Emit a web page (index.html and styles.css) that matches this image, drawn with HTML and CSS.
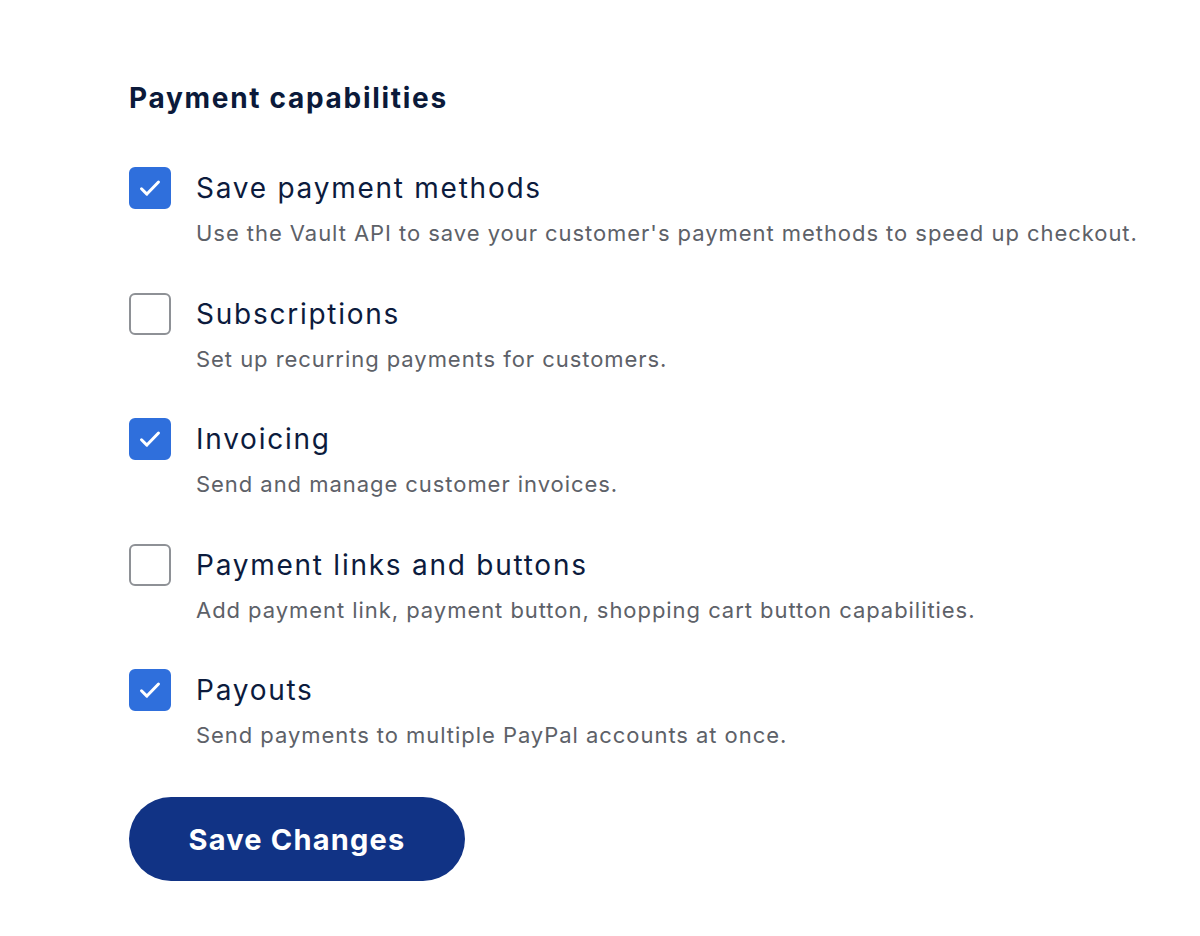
FILE: index.html
```html
<!DOCTYPE html>
<html lang="en">
<head>
<meta charset="utf-8">
<title>Payment capabilities</title>
<link rel="stylesheet" href="styles.css">
</head>
<body>
<main class="panel">
  <h2 class="title">Payment capabilities</h2>
  <ul class="options">
    <li class="option">
      <span class="box checked"><svg viewBox="0 0 24 24" class="tick"><path d="M6 12.5l3.8 3.8L18 7.8"/></svg></span>
      <div class="text">
        <div class="label">Save payment methods</div>
        <div class="desc">Use the Vault API to save your customer's payment methods to speed up checkout.</div>
      </div>
    </li>
    <li class="option">
      <span class="box"></span>
      <div class="text">
        <div class="label">Subscriptions</div>
        <div class="desc">Set up recurring payments for customers.</div>
      </div>
    </li>
    <li class="option">
      <span class="box checked"><svg viewBox="0 0 24 24" class="tick"><path d="M6 12.5l3.8 3.8L18 7.8"/></svg></span>
      <div class="text">
        <div class="label">Invoicing</div>
        <div class="desc">Send and manage customer invoices.</div>
      </div>
    </li>
    <li class="option">
      <span class="box"></span>
      <div class="text">
        <div class="label">Payment links and buttons</div>
        <div class="desc">Add payment link, payment button, shopping cart button capabilities.</div>
      </div>
    </li>
    <li class="option">
      <span class="box checked"><svg viewBox="0 0 24 24" class="tick"><path d="M6 12.5l3.8 3.8L18 7.8"/></svg></span>
      <div class="text">
        <div class="label">Payouts</div>
        <div class="desc">Send payments to multiple PayPal accounts at once.</div>
      </div>
    </li>
  </ul>
  <button class="save">Save Changes</button>
</main>
</body>
</html>
```
FILE: styles.css
```css
html, body {
  margin: 0;
  padding: 0;
  background: #ffffff;
}
body {
  font-family: Inter, "Noto Sans", "Liberation Sans", sans-serif;
  color: #0c1b3d;
}
.panel {
  padding: 80px 0 0 129px;
  display: flex;
  flex-direction: column;
  align-items: flex-start;
}
.title {
  margin: 0;
  font-size: 28px;
  line-height: 36px;
  font-weight: 700;
  letter-spacing: 1.7px;
  color: #0b1a3a;
}
.options {
  list-style: none;
  margin: 51px 0 0;
  padding: 0;
  display: flex;
  flex-direction: column;
  gap: 44.5px;
}
.option {
  display: flex;
  align-items: flex-start;
  gap: 25px;
}
.box {
  flex: none;
  width: 42px;
  height: 42px;
  box-sizing: border-box;
  border: 2px solid #8e9196;
  border-radius: 6px;
  background: #fff;
  display: flex;
  align-items: center;
  justify-content: center;
}
.box.checked {
  background: #2f6fdc;
  border-color: #2f6fdc;
}
.tick {
  width: 34px;
  height: 34px;
  fill: none;
  stroke: #fff;
  stroke-width: 2.1;
  stroke-linecap: round;
  stroke-linejoin: round;
}
.text {
  display: flex;
  flex-direction: column;
  gap: 9px;
}
.label {
  font-size: 28px;
  line-height: 42px;
  letter-spacing: 1.75px;
  color: #0c1b3d;
}
.desc {
  font-size: 22px;
  line-height: 30px;
  letter-spacing: 0.95px;
  color: #5d6168;
}
.save {
  margin-top: 47px;
  width: 336px;
  height: 84px;
  border: none;
  border-radius: 42px;
  background: #113385;
  color: #fff;
  font-family: Inter, "Noto Sans", "Liberation Sans", sans-serif;
  font-size: 29px;
  font-weight: 700;
  letter-spacing: 1.2px;
  cursor: pointer;
}
```
